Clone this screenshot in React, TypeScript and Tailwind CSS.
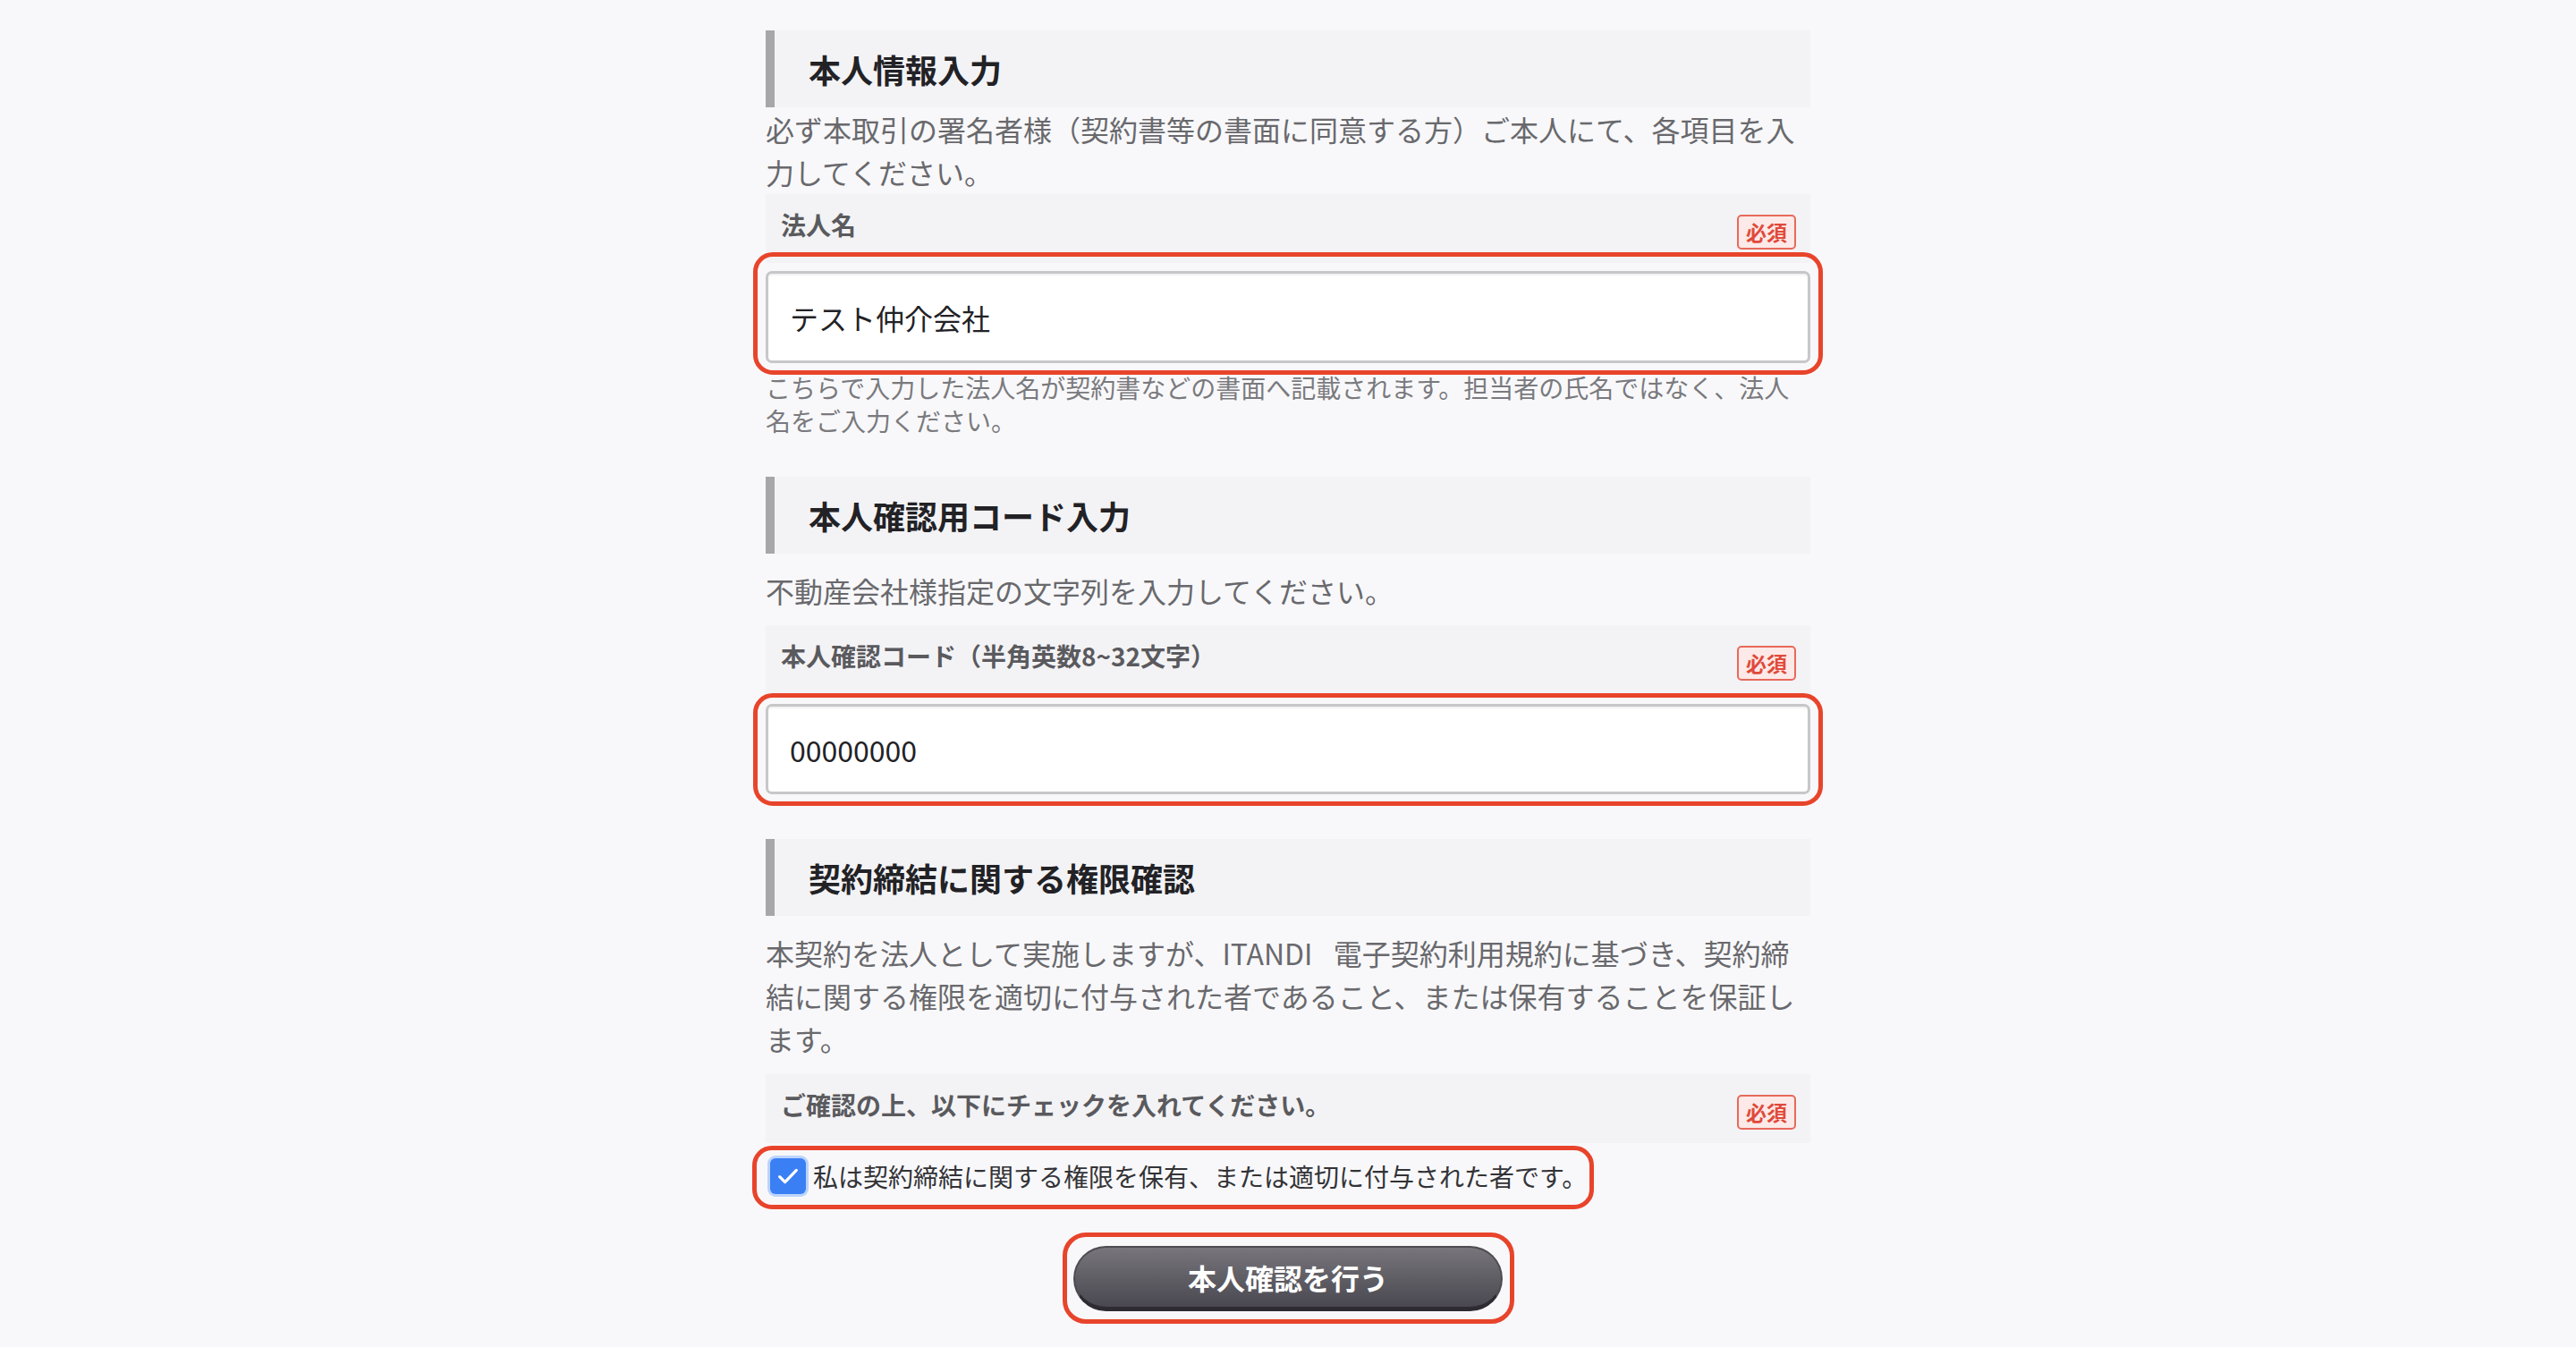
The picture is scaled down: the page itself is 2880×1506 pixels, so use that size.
import React from "react";

type FieldLabelProps = {
	label: string;
	className?: string;
};

// Gray section title with a thick bar on the left
const SectionTitle = ({ title, className = "" }: { title: string; className?: string }) => {
	return (
		<div className={`flex h-[86px] items-center border-l-[10px] border-[#a7a7a9] bg-[#f3f3f5] pl-[38px] ${className}`}>
			<h2 className="text-[36px] font-bold leading-none text-[#222226]">{title}</h2>
		</div>
	);
};

const RequiredBadge = () => {
	return (
		<span className="mt-[7px] flex h-[39px] w-[66px] items-center justify-center rounded-[5px] border-2 border-[#e8695b] bg-[#fde9e7] text-[23px] font-bold leading-none text-[#e04a3b]">
			必須
		</span>
	);
};

const FieldLabel = ({ label, className = "" }: FieldLabelProps) => {
	return (
		<div className={`flex items-start justify-between bg-[#f3f3f5] pb-[15px] pl-[17px] pr-[16px] pt-[16px] ${className}`}>
			<span className="text-[28px] font-bold leading-[36px] text-[#5a5a5e]">{label}</span>
			<RequiredBadge />
		</div>
	);
};

// Red rounded frame laid over a control
const Highlight = ({ className }: { className: string }) => {
	return <div className={`pointer-events-none absolute rounded-[22px] border-[5px] border-[#e8442b] ${className}`} />;
};

const TextField = ({ value, className = "", frame }: { value: string; className?: string; frame: string }) => {
	return (
		<div className={`relative ${className}`}>
			<div className="flex h-full items-center rounded-[7px] border-[3px] border-[#c7c7c9] bg-white pl-[24px] shadow-[inset_0_2px_2px_rgba(0,0,0,0.06)]">
				<span className="text-[32px] leading-none text-[#222226]">{value}</span>
			</div>
			<Highlight className={frame} />
		</div>
	);
};

export default function App() {
	return (
		<div className="min-h-screen bg-[#f8f8fa] font-['Noto_Sans_CJK_JP','Noto_Sans',sans-serif]">
			<div className="mx-auto w-[1168px] pt-[34px]">
				{/* 本人情報入力 */}
				<SectionTitle title="本人情報入力" />
				<p className="text-[32px] leading-[48px] text-[#69696d]">
					必ず本取引の署名者様（契約書等の書面に同意する方）ご本人にて、各項目を入力してください。
				</p>
				<FieldLabel label="法人名" className="mt-[1px]" />
				<TextField
					value="テスト仲介会社"
					className="mt-[9px] h-[103px]"
					frame="-top-[21px] -bottom-[13px] -left-[14px] -right-[14px]"
				/>
				<p className="mt-[9px] text-[28px] leading-[37px] text-[#7a7a7e]">
					こちらで入力した法人名が契約書などの書面へ記載されます。担当者の氏名ではなく、法人名をご入力ください。
				</p>

				{/* 本人確認用コード入力 */}
				<SectionTitle title="本人確認用コード入力" className="mt-[44px]" />
				<p className="mt-[17px] text-[32px] leading-[48px] text-[#69696d]">
					不動産会社様指定の文字列を入力してください。
				</p>
				<FieldLabel label="本人確認コード（半角英数8~32文字）" className="mt-[15px]" />
				<TextField
					value="00000000"
					className="mt-[11px] h-[101px]"
					frame="-top-[12px] -bottom-[13px] -left-[14px] -right-[14px]"
				/>

				{/* 契約締結に関する権限確認 */}
				<SectionTitle title="契約締結に関する権限確認" className="mt-[50px]" />
				<p className="mt-[17px] text-[32px] leading-[48px] text-[#69696d] [word-spacing:16px]">
					本契約を法人として実施しますが、ITANDI 電子契約利用規約に基づき、契約締結に関する権限を適切に付与された者であること、または保有することを保証します。
				</p>
				<FieldLabel label="ご確認の上、以下にチェックを入れてください。" className="mt-[16px]" />
				<div className="mt-[17px] flex">
					<label className="relative flex items-center gap-[8px] pl-[5px]">
						<span className="flex h-[40px] w-[40px] items-center justify-center rounded-[6px] bg-[#3b7ff5] ring-[3px] ring-[#bcd4fb]">
							<svg viewBox="0 0 24 24" className="h-[32px] w-[32px]" fill="none" stroke="white" strokeWidth="2.4" strokeLinecap="round" strokeLinejoin="round">
								<path d="M5 12.5l4.5 4.5L19 7" />
							</svg>
						</span>
						<span className="text-[28px] leading-none text-[#333337]">
							私は契約締結に関する権限を保有、または適切に付与された者です。
						</span>
						<Highlight className="-top-[14px] -bottom-[17px] -left-[15px] -right-[8px] rounded-[18px]" />
					</label>
				</div>

				<div className="mt-[58px] flex justify-center">
					<div className="relative">
						<button className="flex h-[73px] w-[480px] items-center justify-center rounded-full border-2 border-[#4e4c52] border-b-[5px] border-b-[#2e2c32] bg-gradient-to-b from-[#78767c] to-[#4a4850] text-[32px] font-bold leading-none text-white">
							本人確認を行う
						</button>
						<Highlight className="-top-[15px] -bottom-[14px] -left-[12px] -right-[13px] rounded-[26px]" />
					</div>
				</div>
			</div>
		</div>
	);
}
